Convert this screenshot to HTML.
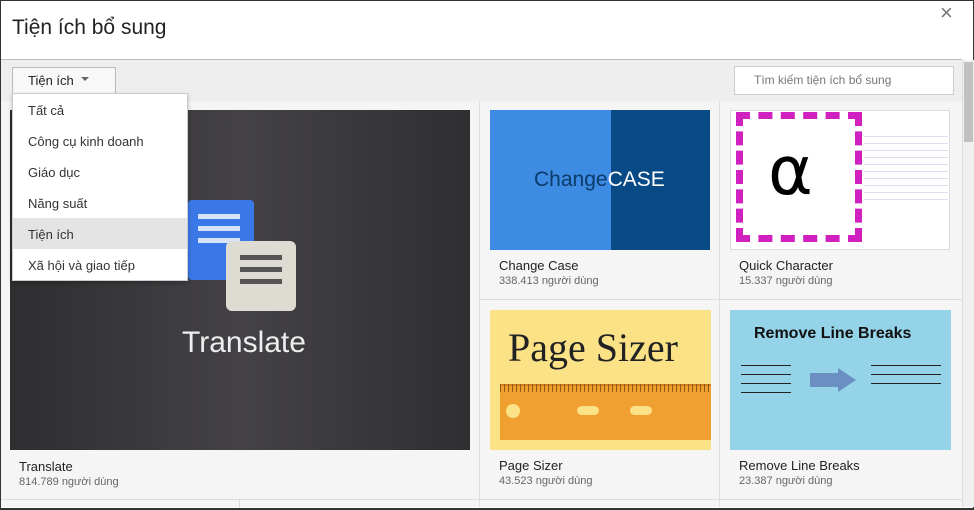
<html><head><style>
body{margin:0;width:974px;height:509px;overflow:hidden;font-family:"Liberation Sans",sans-serif;background:#fff;position:relative}
.a{position:absolute}
.t{font-size:13px;color:#222}
.s{font-size:11px;color:#666}
</style></head><body>
<div class="a" style="left:0;top:0;width:972px;height:507px;border:1px solid #333;border-bottom-width:2px"></div>
<div class="a" style="left:12px;top:16px;font-size:21px;color:#222">Tiện ích bổ sung</div>
<div class="a" style="left:940px;top:0px;font-size:22px;color:#777">×</div>
<div class="a" style="left:1px;top:59px;width:961px;height:41px;background:#eee;border-top:1px solid #bbb;border-bottom:1px solid #ddd"></div>
<div class="a" style="left:1px;top:101px;width:961px;height:406px;background:#f5f5f5"></div>
<div class="a" style="left:962px;top:60px;width:11px;height:447px;background:#f0f0f0;border-left:1px solid #ddd"><div style="margin:2px 1px;height:80px;background:#c1c1c1"></div></div>
<div class="a" style="left:12px;top:67px;width:102px;height:25px;background:#f8f8f8;border:1px solid #bbb"></div>
<div class="a t" style="left:28px;top:73px">Tiện ích</div>
<div class="a" style="left:81px;top:77px;border:4px solid transparent;border-top:4px solid #666"></div>
<div class="a" style="left:734px;top:66px;width:218px;height:27px;background:#fff;border:1px solid #ccc"></div>
<div class="a s" style="left:754px;top:73px;font-size:12px;color:#777">Tìm kiếm tiện ích bổ sung</div>
<div class="a" style="left:479px;top:101px;width:1px;height:406px;background:#ddd"></div>
<div class="a" style="left:719px;top:101px;width:1px;height:406px;background:#ddd"></div>
<div class="a" style="left:480px;top:299px;width:482px;height:1px;background:#ddd"></div>
<div class="a" style="left:1px;top:499px;width:961px;height:1px;background:#ddd"></div>
<div class="a" style="left:239px;top:500px;width:1px;height:8px;background:#ddd"></div>
<div class="a" style="left:10px;top:110px;width:460px;height:340px;background:linear-gradient(90deg,#2e2d2f,#444246 50%,#2f2e30)"></div>
<div class="a" style="left:188px;top:200px;width:66px;height:80px;background:#3b78e7;border-radius:4px"></div>
<div class="a" style="left:198px;top:214px;width:42px;height:5px;background:#d7e3fb;box-shadow:0 12px #d7e3fb,0 24px #d7e3fb"></div>
<div class="a" style="left:226px;top:241px;width:70px;height:70px;background:#dedbd2;border-radius:6px"></div>
<div class="a" style="left:240px;top:255px;width:42px;height:5px;background:#555;box-shadow:0 12px #555,0 24px #555"></div>
<div class="a" style="left:182px;top:326px;font-size:30px;color:#eee">Translate</div>
<div class="a t" style="left:19px;top:459px">Translate</div>
<div class="a s" style="left:19px;top:476px">814.789 người dùng</div>
<div class="a" style="left:490px;top:110px;width:121px;height:140px;background:#3d8be3"></div>
<div class="a" style="left:611px;top:110px;width:99px;height:140px;background:#074a85"></div>
<div class="a" style="left:534px;top:168px;font-size:21px;color:#0b3c6a">Change<span style="color:#fff">CASE</span></div>
<div class="a t" style="left:499px;top:258px">Change Case</div>
<div class="a s" style="left:499px;top:275px">338.413 người dùng</div>
<div class="a" style="left:730px;top:110px;width:220px;height:140px;background:#fff;border:1px solid #ddd;box-sizing:border-box"></div>
<div class="a" style="left:736px;top:112px;width:126px;height:130px;border:7px dashed #d020c0;box-sizing:border-box"></div>
<div class="a" style="left:768px;top:132px;font-size:68px;color:#000;font-family:'DejaVu Sans'">α</div>
<div class="a" style="left:864px;top:130px;width:84px;height:70px;background:repeating-linear-gradient(#fff 0 6px,#dde 6px 7px)"></div>
<div class="a t" style="left:739px;top:258px">Quick Character</div>
<div class="a s" style="left:739px;top:275px">15.337 người dùng</div>
<div class="a" style="left:490px;top:310px;width:221px;height:140px;background:#fbe287"></div>
<div class="a" style="left:508px;top:324px;font-size:40px;font-family:'Liberation Serif',serif;color:#222">Page Sizer</div>
<div class="a" style="left:500px;top:384px;width:211px;height:54px;background:#f0a030;border-top:2px solid #d08020"></div>
<div class="a" style="left:500px;top:384px;width:211px;height:8px;background:repeating-linear-gradient(90deg,#8a5a10 0 1px,transparent 1px 4px)"></div>
<div class="a" style="left:506px;top:404px;width:14px;height:14px;border-radius:50%;background:#fbe287"></div>
<div class="a" style="left:577px;top:406px;width:22px;height:9px;border-radius:5px;background:#fbe287"></div>
<div class="a" style="left:630px;top:406px;width:22px;height:9px;border-radius:5px;background:#fbe287"></div>
<div class="a t" style="left:499px;top:458px">Page Sizer</div>
<div class="a s" style="left:499px;top:475px">43.523 người dùng</div>
<div class="a" style="left:730px;top:310px;width:221px;height:140px;background:#94d3e8"></div>
<div class="a" style="left:754px;top:325px;font-size:16px;font-weight:bold;color:#111">Remove Line Breaks</div>
<div class="a" style="left:741px;top:360px;width:50px;height:40px;background:repeating-linear-gradient(#94d3e8 0 5px,#222 5px 6px,#94d3e8 6px 9px)"></div>
<div class="a" style="left:810px;top:373px;width:28px;height:14px;background:#6a8fc0"></div>
<div class="a" style="left:838px;top:368px;border:12px solid transparent;border-left:18px solid #6a8fc0;border-right:0"></div>
<div class="a" style="left:871px;top:360px;width:70px;height:30px;background:repeating-linear-gradient(#94d3e8 0 5px,#222 5px 6px,#94d3e8 6px 9px)"></div>
<div class="a t" style="left:739px;top:458px">Remove Line Breaks</div>
<div class="a s" style="left:739px;top:475px">23.387 người dùng</div>
<div class="a" style="left:12px;top:93px;width:174px;height:186px;background:#fff;border:1px solid #ccc;box-shadow:0 2px 4px rgba(0,0,0,.25)"></div>
<div class="a" style="left:13px;top:218px;width:174px;height:31px;background:#e4e4e4"></div>
<div class="a t" style="left:28px;top:103px;color:#333">Tất cả</div>
<div class="a t" style="left:28px;top:134px;color:#333">Công cụ kinh doanh</div>
<div class="a t" style="left:28px;top:165px;color:#333">Giáo dục</div>
<div class="a t" style="left:28px;top:196px;color:#333">Năng suất</div>
<div class="a t" style="left:28px;top:227px;color:#333">Tiện ích</div>
<div class="a t" style="left:28px;top:258px;color:#333">Xã hội và giao tiếp</div>
</body></html>
